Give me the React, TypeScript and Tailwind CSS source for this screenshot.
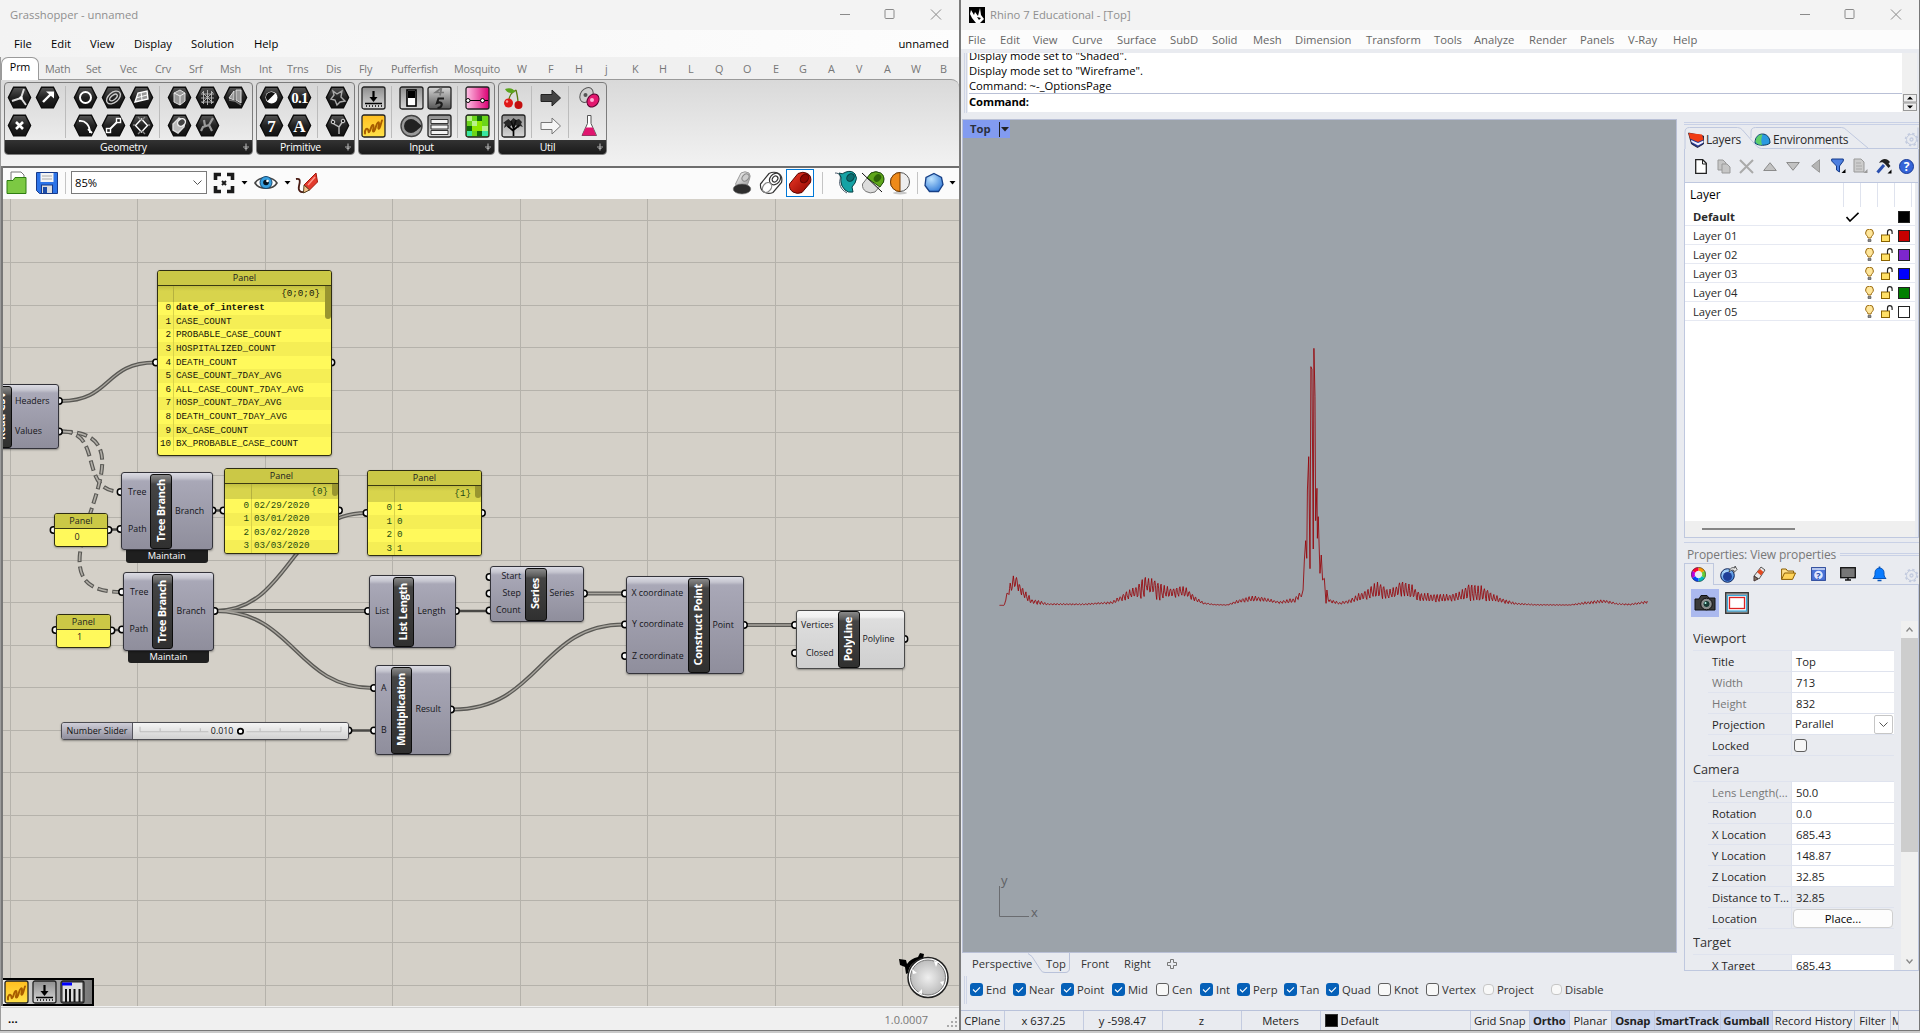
import React from "react";

/* ------------------------------------------------------------------ */
/* Shared pieces                                                       */
/* ------------------------------------------------------------------ */

type Item = [string, number];

function Strip({ items, className = "" }: { items: Item[]; className?: string }) {
  return (
    <div className={`flex items-center whitespace-nowrap ${className}`}>
      {items.map(([label, w], i) => (
        <div key={i} className="shrink-0" style={{ width: w }}>
          {label}
        </div>
      ))}
    </div>
  );
}

function WindowButtons() {
  return (
    <svg className="h-[30px] w-[136px] shrink-0" viewBox="0 0 136 30" fill="none" stroke="#8a8a8a" strokeWidth="1">
      <path d="M17 14.5h10" />
      <rect x="62" y="9.5" width="9" height="9" rx="1" />
      <path d="M108 9.5l10 10M118 9.5l-10 10" />
    </svg>
  );
}

function Caret({ className = "" }: { className?: string }) {
  return (
    <svg className={`h-[4px] w-[7px] shrink-0 ${className}`} viewBox="0 0 7 4">
      <path d="M0.5 0h6L3.5 3.5z" fill="#000" />
    </svg>
  );
}

/* ------------------------------------------------------------------ */
/* Grasshopper ribbon                                                  */
/* ------------------------------------------------------------------ */

function Hex({ children }: { children: React.ReactNode }) {
  return (
    <svg className="h-[23px] w-[25px]" viewBox="0 0 25 23" fill="none" stroke="#fff" strokeWidth="1.4">
      <path d="M6.6 1.2h11.8l5.2 10.3-5.2 10.3H6.6L1.4 11.5z" fill="url(#hexFill)" stroke="#0c0c0c" strokeWidth="1.4" />
      {children}
    </svg>
  );
}

function Square({ children, fill = "url(#greyFill)" }: { children: React.ReactNode; fill?: string }) {
  return (
    <svg className="h-[24px] w-[25px]" viewBox="0 0 25 24" fill="none">
      <rect x="1" y="1" width="23" height="22" rx="2" fill={fill} stroke="#222" strokeWidth="1.3" />
      {children}
    </svg>
  );
}

function Plain({ children }: { children: React.ReactNode }) {
  return (
    <svg className="h-[24px] w-[25px]" viewBox="0 0 25 24" fill="none">
      {children}
    </svg>
  );
}

function Defs() {
  return (
    <svg className="absolute h-0 w-0" aria-hidden="true">
      <defs>
        <linearGradient id="hexFill" x1="0" y1="0" x2="0" y2="1">
          <stop offset="0" stopColor="#555" />
          <stop offset="0.5" stopColor="#222" />
          <stop offset="1" stopColor="#111" />
        </linearGradient>
        <linearGradient id="greyFill" x1="0" y1="0" x2="0" y2="1">
          <stop offset="0" stopColor="#8e8e8e" />
          <stop offset="1" stopColor="#d8d8d8" />
        </linearGradient>
        <linearGradient id="greyDark" x1="0" y1="0" x2="0" y2="1">
          <stop offset="0" stopColor="#d6d6d6" />
          <stop offset="1" stopColor="#555" />
        </linearGradient>
        <linearGradient id="pinkFill" x1="0" y1="0" x2="1" y2="0">
          <stop offset="0" stopColor="#ffc2e6" />
          <stop offset="1" stopColor="#dc0074" />
        </linearGradient>
        <linearGradient id="yellowFill" x1="0" y1="0" x2="0" y2="1">
          <stop offset="0" stopColor="#ffbe20" />
          <stop offset="1" stopColor="#ffe24a" />
        </linearGradient>
        <linearGradient id="cyl" x1="0" y1="0" x2="1" y2="1">
          <stop offset="0" stopColor="#fff" />
          <stop offset="1" stopColor="#999" />
        </linearGradient>
        <linearGradient id="redTube" x1="0" y1="0" x2="1" y2="1">
          <stop offset="0" stopColor="#f23a28" />
          <stop offset="1" stopColor="#8c0500" />
        </linearGradient>
        <radialGradient id="ballBlue" cx="0.35" cy="0.3" r="0.8">
          <stop offset="0" stopColor="#bfe4ff" />
          <stop offset="1" stopColor="#2f78d6" />
        </radialGradient>
        <radialGradient id="knob" cx="0.5" cy="0.5" r="0.5">
          <stop offset="0" stopColor="#efefef" />
          <stop offset="1" stopColor="#bdbdbd" />
        </radialGradient>
      </defs>
    </svg>
  );
}

function Group({ title, className, children }: { title: string; className: string; children: React.ReactNode }) {
  return (
    <div className={`flex h-[73px] flex-col overflow-hidden rounded-[4px] border border-[#7c7c7c] bg-gradient-to-b from-[#d6d6d6] to-[#f1f1f1] ${className}`}>
      <div className="flex h-[57px] items-center">{children}</div>
      <div className="flex flex-1 items-center bg-gradient-to-b from-[#333] to-[#1a1a1a] text-[10.500px] leading-none tracking-[-0.25px] text-white">
        <span className="flex-1 text-center">{title}</span>
        <svg className="mr-[2px] h-[8px] w-[8px]" viewBox="0 0 8 8" stroke="#aaa" strokeWidth="1.2">
          <path d="M4 0.500v7M1 4h6M2.500 5.500h3" />
        </svg>
      </div>
    </div>
  );
}

function Cells({ className = "", children }: { className?: string; children: React.ReactNode }) {
  return <div className={`grid auto-cols-[28px] grid-flow-col grid-rows-[28px_28px] place-items-center ${className}`}>{children}</div>;
}

function Sep({ className = "" }: { className?: string }) {
  return <div className={`h-[52px] w-px shrink-0 bg-[#bcbcbc] ${className}`} />;
}

const Squiggle = () => (
  <path d="M4 19.500c-.5-4 2-6 3-4s0 4 1.500 2S10 12 11.500 11s1 3 .5 5 1 2.500 2-.5 1.500-6 3-7 1 2 .5 4 0 3 1 1.500S20 9 21 6.500" stroke="#a85d00" strokeWidth="1.900" strokeLinejoin="round" strokeLinecap="round" />
);

function Press() {
  return (
    <g>
      <path d="M12.5 5v8" stroke="#000" strokeWidth="2.2" />
      <path d="M8.5 11h8l-4 5z" fill="#000" />
      <path d="M4 17.5h17M5 20h1M8 20h1M11 20h1M14 20h1M17 20h1M20 20h1" stroke="#000" strokeWidth="1.5" />
    </g>
  );
}

function Ribbon() {
  return (
    <div className="flex h-[87px] gap-[3px] rounded-tr-[8px] border-t border-[#9a9a9a] bg-gradient-to-b from-[#d9d9d9] to-[#f2f2f2] pl-[3px] pt-[2px]">
      <Group title="Geometry" className="w-[249px]">
        <Cells>
          <Hex><path d="M14 12L17 3M14 12l-9 3M14 12l5 7" stroke="#ddd" strokeWidth="2" /><circle cx="14" cy="12" r="1.800" fill="#fff" stroke="none" /></Hex>
          <Hex><path d="M9 8l7 7M9 15l7-7" strokeWidth="2.6" /></Hex>
          <Hex><path d="M8 16l8-8" strokeWidth="2.4" /><path d="M11 5.500h8v7z" fill="#fff" stroke="none" /></Hex>
        </Cells>
        <Sep className="ml-[4px]" />
        <Cells className="ml-[5px]">
          <Hex><circle cx="12.500" cy="11.500" r="5.500" strokeWidth="2" /></Hex>
          <Hex><path d="M6 7c6-1 11 4 11 12M15 15l4 4" strokeWidth="1.8" /></Hex>
          <Hex><ellipse cx="12.500" cy="11.500" rx="8" ry="5" transform="rotate(-40 12.500 11.500)" stroke="#ccc" /><ellipse cx="12.500" cy="11.500" rx="4.500" ry="2.200" transform="rotate(-40 12.500 11.500)" stroke="#ccc" /></Hex>
          <Hex><path d="M7 17L18 6" strokeWidth="1.800" /><rect x="5.500" y="14.500" width="4" height="4" fill="#222" /><rect x="15.500" y="4.500" width="4" height="4" fill="#222" /></Hex>
          <Hex><path d="M6 16l3-9 9-2 1 8z" fill="#999" /><path d="M7 12l11-3M12 6l1 8" strokeWidth="1" /></Hex>
          <Hex><path d="M12.500 5l6 6.500-6 6.500-6-6.500z" /><path d="M9 3l3 3M16 3l-3 3M9 20l3-3M16 20l-3-3M4 11h2M19 11h2" stroke="#888" /></Hex>
        </Cells>
        <Sep className="ml-[4px]" />
        <Cells className="ml-[5px]">
          <Hex><path d="M7 7l6-3 5 3v8l-5 4-6-3z" fill="#999" stroke="#ddd" strokeWidth="1" /><path d="M7 7l6 3 5-3M13 10v9" stroke="#eee" strokeWidth="1" /></Hex>
          <Hex><path d="M6 10l6-6 6 3-1 6-6 6-5-3z" fill="#bbb" stroke="#ddd" /><ellipse cx="14.500" cy="8.500" rx="4.200" ry="3.400" transform="rotate(-40 14.500 8.500)" fill="#444" stroke="#eee" /></Hex>
          <Hex><path d="M6 8h13M6 12h13M6 16h13M8.500 5v13M12.500 4v15M16.500 5v13M7 6l11 11M18 6L7 17" stroke="#bbb" strokeWidth="0.900" /></Hex>
          <Hex><path d="M14 11L18 4M14 11l-6 2-2 4M14 11l3 6M9 6l1 6" stroke="#999" strokeWidth="2.200" /></Hex>
          <Hex><path d="M6 12l5-7v9zM13 4h5v13l-5-3z" fill="#999" stroke="#ddd" strokeWidth="1" /><path d="M6 14l6 1 6 4" stroke="#777" /></Hex>
        </Cells>
      </Group>
      <Group title="Primitive" className="w-[99px]">
        <Cells>
          <Hex><circle cx="12.500" cy="11.500" r="6" fill="#fff" stroke="none" /><path d="M8.500 15a5 5 0 0 1 7.500-7.500z" fill="#111" stroke="none" /></Hex>
          <Hex><text x="12.500" y="17.500" textAnchor="middle" fill="#fff" stroke="none" className="font-['Liberation_Serif',serif] text-[17px] font-bold">7</text></Hex>
          <Hex><text x="12.500" y="16.500" textAnchor="middle" fill="#fff" stroke="none" className="font-['Liberation_Serif',serif] text-[15px] font-bold tracking-[-0.8px]">0.1</text></Hex>
          <Hex><text x="12.500" y="17.500" textAnchor="middle" fill="#fff" stroke="none" className="font-['Liberation_Serif',serif] text-[17px] font-bold">A</text></Hex>
        </Cells>
        <Sep className="ml-[4px]" />
        <Cells className="ml-[5px]">
          <Hex><path d="M8 5l4 3 5-3-1 6 4 4-5 1-3 3-2-5-4-1 3-4z" stroke="#aaa" /></Hex>
          <Hex><path d="M7 5l2 5 5 3v7M18 7l-4 6" stroke="#bbb" /><circle cx="18" cy="7" r="1.800" fill="#222" stroke="#ddd" strokeWidth="1" /><circle cx="8" cy="8" r="1.800" fill="#222" stroke="#ddd" strokeWidth="1" /></Hex>
        </Cells>
      </Group>
      <Group title="Input" className="w-[137px]">
        <Cells>
          <Square><Press /></Square>
          <Square fill="url(#yellowFill)"><Squiggle /></Square>
        </Cells>
        <Sep className="ml-[4px]" />
        <Cells className="ml-[5px]">
          <Square><rect x="8" y="4" width="9" height="16" fill="#fff" stroke="#000" strokeWidth="1.600" /><rect x="9" y="5" width="7" height="7" fill="#000" /></Square>
          <Plain><circle cx="12.500" cy="12" r="10.500" fill="#999" stroke="#444" strokeWidth="1.400" /><circle cx="12" cy="12" r="7" fill="#222" /><path d="M17 7l6 5-6 5z" fill="#222" /></Plain>
          <Square fill="url(#greyDark)">
            <path d="M14.500 2L8.500 6.500H17M14.500 2l-1.500 7.500" stroke="#777" strokeWidth="1.700" />
            <path d="M17 12.500h-5.500L10 17c3-1.500 5.500 0 4.500 2.500-.5 1.500-2 2.500-4 2.500" stroke="#1c1c1c" strokeWidth="2.100" />
          </Square>
          <Square><path d="M4 5.500h17v4H4zM4 11h17v4H4zM4 16.500h17v4H4z" fill="#f2f2f2" stroke="#333" strokeWidth="1" /></Square>
        </Cells>
        <Sep className="ml-[4px]" />
        <Cells className="ml-[5px]">
          <Square fill="url(#pinkFill)"><path d="M2 14.500h21" stroke="#000" /><circle cx="3" cy="14.500" r="2" fill="#fff" stroke="#000" /><circle cx="17.500" cy="14.500" r="2" fill="#fff" stroke="#000" /></Square>
          <Square fill="#6bd51a">
            <path d="M2 2h5v5H2zM7 7h5v5H7zM17 12h6v5h-6z" fill="#b9f28a" />
            <path d="M12 2h5v5h-5zM2 12h5v5H2zM12 17h5v5h-5z" fill="#0f6a0c" />
            <path d="M12 7h5v10h-5zM7 12h5v5H7z" fill="#8de700" />
            <path d="M17 17h6v5h-6zM2 17h5v5H2z" fill="#38e6a0" />
          </Square>
        </Cells>
      </Group>
      <Group title="Util" className="w-[109px]">
        <Cells>
          <Plain><path d="M8 15c0-5 3-9 7-11M17 17c0-5-1-9-2-13" stroke="#5a7a10" strokeWidth="1.300" /><path d="M4 3c5-2 9 0 10 3-4 2-8 1-10-3z" fill="#5aa51b" /><circle cx="7.500" cy="17" r="4.500" fill="#e01818" /><circle cx="17.500" cy="19" r="4" fill="#c30f0f" /><circle cx="6" cy="15.500" r="1.200" fill="#ff9c9c" /></Plain>
          <Square><path d="M12.500 22v-8M12.500 17l-6-5M12.500 16l6-5M12.500 14l-2.500-7M12.500 14l2.500-8" stroke="#000" strokeWidth="1.700" /><path d="M4.500 7l3-2 2 2 3-3 2.500 2 3-1 3 3-1 2 2 3-3-1-2 2-2-3-2 2-2-2-3 3-2-2-3 2 1-4-2-1z" fill="#111" fillOpacity="0.850" /></Square>
        </Cells>
        <Sep className="ml-[4px]" />
        <Cells className="ml-[5px]">
          <Plain><path d="M2 8.500h11V4l8.500 8L13 20v-4.500H2z" fill="#444" stroke="#222" /></Plain>
          <Plain><path d="M2 8.500h11V4l8.500 8L13 20v-4.500H2z" fill="#f6f6f6" stroke="#777" /></Plain>
        </Cells>
        <Sep className="ml-[3px]" />
        <Cells className="ml-[6px]">
          <Plain><ellipse cx="9.500" cy="9" rx="6" ry="8" transform="rotate(35 9.500 9)" fill="#cfcfcf" stroke="#555" /><circle cx="8.500" cy="9" r="2" fill="#555" /><ellipse cx="16" cy="14.500" rx="5.500" ry="7" transform="rotate(35 16 14.500)" fill="#e3186f" stroke="#5c0030" /><circle cx="15" cy="14" r="2" fill="#ffb0d6" /></Plain>
          <Plain><path d="M10.500 1.500h3.500v8l5.500 12H5l5.500-12z" fill="#fff" stroke="#555" /><path d="M8.800 13.500h7l3.500 8H5z" fill="#e0156e" /></Plain>
        </Cells>
      </Group>
    </div>
  );
}

/* ------------------------------------------------------------------ */
/* Grasshopper canvas toolbar                                          */
/* ------------------------------------------------------------------ */

function CanvasToolbar() {
  return (
    <div className="flex h-[33px] items-center border-t-2 border-[#6e6e6e] bg-[#fbfbfb] pb-[2px] pl-[3px]">
      <svg className="h-[24px] w-[21px]" viewBox="0 0 21 24"><path d="M5 1h10l3 3v13H5z" fill="#fff" stroke="#777" /><path d="M1 9.500h6l2-3h11v16H1z" fill="#7cc943" stroke="#2e7d12" /></svg>
      <svg className="ml-[8px] h-[24px] w-[24px]" viewBox="0 0 24 24"><path d="M1.500 1.500h21v21h-18l-3-3z" fill="#2d74e8" stroke="#173a8a" /><rect x="5.500" y="2" width="13" height="9" fill="#f4f4f4" /><path d="M7 5h10M7 8h10" stroke="#aaa" /><rect x="6.500" y="14" width="11" height="8.500" fill="#ddd" stroke="#173a8a" /><rect x="8" y="16" width="4" height="6" fill="#1d4ca8" /></svg>
      <div className="ml-[6px] h-[22px] w-px bg-[#c4c4c4]" />
      <div className="ml-[5px] flex h-[23px] w-[136px] items-center border border-[#7a7a7a] bg-white pl-[3px] pr-[4px] text-[11.250px] text-black">
        <span className="flex-1">85%</span>
        <svg className="h-[6px] w-[9px]" viewBox="0 0 9 6" fill="none" stroke="#555"><path d="M0.500 0.500l4 4 4-4" /></svg>
      </div>
      <svg className="ml-[5px] h-[24px] w-[24px]" viewBox="0 0 24 24" fill="none" stroke="#1b1b1b"><path d="M9 3.500H3.500V9M15 3.500h5.500V9M9 20.500H3.500V15M15 20.500h5.500V15" strokeWidth="3.600" /><path d="M10 10l4 4M14 10l-4 4" strokeWidth="2" /></svg>
      <Caret className="ml-[5px]" />
      <svg className="ml-[6px] h-[20px] w-[24px]" viewBox="0 0 24 20"><path d="M1 10C5 3 19 3 23 10 19 17 5 17 1 10z" fill="#fff" stroke="#444" strokeWidth="1.600" /><circle cx="12" cy="9.500" r="6" fill="#37a0e0" stroke="#15466e" /><circle cx="12" cy="9.500" r="2.800" fill="#04121e" /><circle cx="13.500" cy="8" r="1.300" fill="#fff" /></svg>
      <Caret className="ml-[6px]" />
      <svg className="ml-[4px] h-[24px] w-[24px]" viewBox="0 0 24 24" fill="none"><path d="M1 8c5-1 4 3 3 7s1 8 7 5" stroke="#4a1c14" strokeWidth="1.800" /><path d="M9 14L21 2l1.500 9-8 8z" fill="#e33a2c" stroke="#a21508" /><path d="M9 14l5.500 5-6 3z" fill="#f5c18a" stroke="#542" /><path d="M13 14l7-8" stroke="#ff9a8c" strokeWidth="1.500" /></svg>
      <div className="flex-1" />
      <div className="flex items-center">
        <svg className="h-[26px] w-[20px]" viewBox="0 0 20 26"><path d="M3.500 14L9 3q4-2.500 8 0 2 3 .5 6L15 16H5z" fill="url(#cyl)" stroke="#999" /><ellipse cx="13.500" cy="7.500" rx="4" ry="3" transform="rotate(-50 13.500 7.500)" fill="#ccc" stroke="#888" /><ellipse cx="10" cy="19" rx="8.800" ry="5" fill="#2e2e2e" stroke="#777" strokeWidth="0.600" /></svg>
        <svg className="ml-[7px] h-[24px] w-[24px]" viewBox="0 0 24 24" fill="#fff" stroke="#333" strokeWidth="1.200"><path d="M1.500 13L10 2.500q5-2.500 9.500 0t3 9L14 21.500q-5 2-9-.5T1.500 13z" /><ellipse cx="16" cy="8" rx="6.300" ry="5" transform="rotate(-50 16 8)" /><ellipse cx="16" cy="8" rx="3.300" ry="2.500" transform="rotate(-50 16 8)" /><ellipse cx="8" cy="16.500" rx="4" ry="5.500" transform="rotate(40 8 16.500)" fill="none" stroke="#888" /></svg>
        <div className="ml-[3px] flex h-[28px] w-[28px] items-center justify-center border border-[#0078d7] bg-[#fff]">
          <svg className="h-[24px] w-[24px]" viewBox="0 0 24 24" stroke="#5a0400"><path d="M1.500 13L10 2.500q5-2.500 9.500 0t3 9L14 21.500q-5 2-9-.5T1.500 13z" fill="url(#redTube)" /><ellipse cx="16.500" cy="7.500" rx="4.800" ry="3.600" transform="rotate(-50 16.500 7.500)" fill="#8f0802" /></svg>
        </div>
        <div className="ml-[8px] h-[22px] w-px bg-[#c4c4c4]" />
        <svg className="ml-[11px] h-[25px] w-[24px]" viewBox="0 0 24 25"><path d="M1 3c5 0 6 3 5 7s0 9 7 13" fill="none" stroke="#456" /><path d="M5 3q3 2 7-1 6-2 9 2t0 9l-3 4 1 5q-5 1-8-2-4-4-4-8 1-5-2-9z" fill="#16a3a5" stroke="#063f42" /><ellipse cx="16.500" cy="7.500" rx="4.200" ry="3.300" transform="rotate(-50 16.500 7.500)" fill="#0b6e70" stroke="#063f42" /></svg>
        <svg className="ml-[3px] h-[25px] w-[24px]" viewBox="0 0 24 25"><path d="M1.500 14L10 3q5-2.500 9.500 0t3 9L14 22q-5 2-9-.5T1.500 14z" fill="#dcdcdc" stroke="#777" /><path d="M6 8l4-5q5-2.500 9.500 0t3 9L19 17z" fill="#5ea61a" stroke="#23520a" /><ellipse cx="16.500" cy="8" rx="4.200" ry="3.300" transform="rotate(-50 16.500 8)" fill="#2e6408" /><path d="M1 3l20 19" stroke="#111" /></svg>
        <svg className="ml-[4px] h-[25px] w-[22px]" viewBox="0 0 22 25"><circle cx="11" cy="12" r="9.500" fill="#eee" stroke="#555" /><path d="M11 2.500a9.500 9.500 0 0 0 0 19z" fill="#ee8a19" stroke="#7a3d00" /><ellipse cx="11" cy="23" rx="7" ry="1.500" fill="#0003" /></svg>
        <div className="ml-[6px] h-[22px] w-px bg-[#c4c4c4]" />
        <svg className="ml-[6px] h-[22px] w-[20px]" viewBox="0 0 20 22"><path d="M10 1.500l7.500 4 1.500 7-4.500 7h-9l-4.500-6 1-8z" fill="url(#ballBlue)" stroke="#163f86" strokeWidth="1.300" /></svg>
        <Caret className="ml-[5px] mr-[3px]" />
      </div>
    </div>
  );
}

/* ------------------------------------------------------------------ */
/* Node graph                                                          */
/* ------------------------------------------------------------------ */

const OX = 3;
const OY = 199;

function at(x: number, y: number, w?: number, h?: number): React.CSSProperties {
  return { left: x - OX, top: y - OY, width: w, height: h };
}

function Label({ x, y, children }: { x: number; y: number; children: React.ReactNode }) {
  return (
    <div className="absolute flex h-[12px] items-center whitespace-nowrap text-[8.800px] leading-none text-[#15151a]" style={at(x, y - 6)}>
      {children}
    </div>
  );
}

type NodeSpec = {
  title: string;
  x: number; y: number; w: number; h: number;
  sx: number; sw: number;
  light?: boolean;
  labels: [string, number, number][];
  tag?: boolean;
};

const nodes: NodeSpec[] = [
  { title: "Read CSV", x: -40, y: 384, w: 99, h: 65, sx: -9, sw: 21, labels: [["Headers", 15, 401], ["Values", 15, 431]] },
  { title: "Tree Branch", x: 121, y: 472, w: 91.500, h: 78, sx: 150, sw: 22, tag: true, labels: [["Tree", 128, 492], ["Path", 128, 529], ["Branch", 175, 511]] },
  { title: "Tree Branch", x: 123, y: 572, w: 91, h: 78.500, sx: 152, sw: 21, tag: true, labels: [["Tree", 130, 592], ["Path", 129.500, 629], ["Branch", 176.500, 611]] },
  { title: "List Length", x: 369, y: 575, w: 87, h: 73, sx: 393, sw: 21, labels: [["List", 375, 611], ["Length", 417.500, 611]] },
  { title: "Multiplication", x: 375, y: 665, w: 76, h: 90, sx: 391, sw: 21, labels: [["A", 381, 688], ["B", 381, 730.500], ["Result", 415.500, 709.500]] },
  { title: "Series", x: 490, y: 566, w: 94, h: 56, sx: 525, sw: 21.500, labels: [["Start", 501.500, 576.500], ["Step", 502.500, 593.500], ["Count", 496, 610.500], ["Series", 549.500, 593.500]] },
  { title: "Construct Point", x: 626, y: 576, w: 118, h: 98, sx: 688, sw: 21.500, labels: [["X coordinate", 631.500, 593.500], ["Y coordinate", 632, 624.500], ["Z coordinate", 632, 656], ["Point", 712.500, 625]] },
  { title: "PolyLine", x: 795.500, y: 609.500, w: 109, h: 59.500, sx: 838, sw: 21.500, light: true, labels: [["Vertices", 801, 625], ["Closed", 806, 653], ["Polyline", 862.500, 639]] },
];

function GraphNode({ n }: { n: NodeSpec }) {
  return (
    <>
      {n.tag && (
        <div className="absolute flex items-end justify-center rounded-[3px] bg-[#1f1f1f] pb-[2px] text-[9.250px] leading-none text-white" style={at(n.x + 5, n.y + n.h - 8, n.w - 10, 20.500)}>
          Maintain
        </div>
      )}
      <div
        className={`absolute rounded-[3px] border-[1.5px] shadow-[0_1px_2px_rgba(0,0,0,0.35)] ${
          n.light
            ? "border-[#4a4a4a] bg-[linear-gradient(#f6f6f6_0px,#f0f0f0_6px,#dedede_8px,#cfcfcf_100%)]"
            : "border-[#33333a] bg-[linear-gradient(#dcdce4_0px,#c6c6d0_5px,#a9a8b7_8px,#8f8e9c_100%)]"
        }`}
        style={at(n.x, n.y, n.w, n.h)}
      />
      <div className="absolute flex items-center justify-center rounded-[3px] border-[1.5px] border-[#0c0c0c] bg-[linear-gradient(#8a8a8a_0px,#5c5c5c_7px,#444_9px,#303030_100%)] pr-[2px]" style={at(n.sx, n.y + 1.500, n.sw, n.h - 3)}>
        <span className="rotate-180 whitespace-nowrap text-[11px] font-bold leading-none tracking-[-0.3px] text-white [writing-mode:vertical-rl]">{n.title}</span>
      </div>
      {n.labels.map(([t, x, y]) => (
        <Label key={t} x={x} y={y}>{t}</Label>
      ))}
    </>
  );
}

type PanelSpec = {
  x: number; y: number; w: number; h: number;
  path: string; index: number; rows: string[]; thumb: number; green?: boolean; pad: number;
};

const panels: PanelSpec[] = [
  {
    x: 157, y: 270, w: 175, h: 186, path: "{0;0;0}", index: 17, thumb: 33, pad: 11,
    rows: ["date_of_interest", "CASE_COUNT", "PROBABLE_CASE_COUNT", "HOSPITALIZED_COUNT", "DEATH_COUNT", "CASE_COUNT_7DAY_AVG", "ALL_CASE_COUNT_7DAY_AVG", "HOSP_COUNT_7DAY_AVG", "DEATH_COUNT_7DAY_AVG", "BX_CASE_COUNT", "BX_PROBABLE_CASE_COUNT"],
  },
  { x: 224, y: 467.500, w: 115, h: 86, path: "{0}", index: 28, thumb: 12, pad: 10, green: true, rows: ["02/29/2020", "03/01/2020", "03/02/2020", "03/03/2020"] },
  { x: 367, y: 470, w: 115, h: 86, path: "{1}", index: 28, thumb: 12, pad: 10, green: true, rows: ["1", "0", "0", "1"] },
];

function DataPanel({ p }: { p: PanelSpec }) {
  const cols = { gridTemplateColumns: `${p.index - 1}px 1fr` };
  return (
    <div className="absolute flex flex-col overflow-hidden rounded-[3px] border-[1.5px] border-[#2e2d12] bg-[#fff95b] shadow-[0_1px_2px_rgba(0,0,0,0.3)]" style={at(p.x, p.y, p.w, p.h)}>
      <div className="flex h-[15px] shrink-0 items-center justify-center border-b border-[#3b3a12] bg-[#cbc846] pb-px text-[9px] leading-none text-[#222]">Panel</div>
      <div className={`relative flex flex-1 flex-col font-['Liberation_Mono',monospace] text-[9.250px] leading-none ${p.green ? "text-[#1d4a12]" : "text-[#14140a]"}`}>
        <div className="grid h-[15.500px] shrink-0 bg-[linear-gradient(#c2bf40_0px,#d8d44c_5px)]" style={cols}>
          <div className="border-r border-[#b5b13f]" />
          <div className="flex items-center justify-end" style={{ paddingRight: p.pad }}>{p.path}</div>
        </div>
        {p.rows.map((r, i) => (
          <div key={i} className={`grid h-[13.600px] shrink-0 items-stretch ${i % 2 ? "bg-[#f5ee55]" : "bg-[#fff95b]"}`} style={cols}>
            <div className="flex items-center justify-end border-r border-[#d8d24a] pb-px pr-[2px]">{i}</div>
            <div className={`flex items-center whitespace-nowrap pb-px pl-[2px] ${!p.green && i === 0 ? "font-bold" : ""}`}>{r}</div>
          </div>
        ))}
        <div className="absolute right-0 top-0 w-[6px] rounded-b-[3px] bg-[#99952f]" style={{ height: p.thumb }} />
      </div>
    </div>
  );
}

function ValuePanel({ x, y, w, value }: { x: number; y: number; w: number; value: string }) {
  return (
    <div className="absolute flex flex-col overflow-hidden rounded-[3px] border-[1.5px] border-[#2e2d12] bg-[#fff95b] text-[9px] leading-none text-[#222] shadow-[0_1px_2px_rgba(0,0,0,0.3)]" style={at(x, y, w, 34)}>
      <div className="flex h-[15px] items-center justify-center border-b border-[#3b3a12] bg-[#cbc846] pb-px">Panel</div>
      <div className="flex flex-1 items-center justify-center pb-[3px] pr-[8px]">{value}</div>
    </div>
  );
}

const doubleWires = [
  "M61 401C112 401 104 362.500 155 362.500",
  "M215 611C290 611 290 513 366 513",
  "M215 611H368",
  "M215 611C295 611 295 688 373 688",
  "M453 709.500C540 709.500 540 624.500 624 624.500",
  "M586 593.500H624",
  "M746 625H795",
];
const dashedWires = ["M62 431.500C104 431.500 78 491.500 120 491.500", "M62 431.500C172 431.500 9 592 121 592"];
const singleWires = ["M214 510.500H223", "M458 611H488", "M351 730.500H373", "M110 529.500H120", "M113 630H121"];
const inPorts = [[156, 362.500], [120.500, 492], [120.500, 529], [53.500, 530], [122, 592], [122, 629.500], [55.500, 630], [223.500, 510.500], [366.500, 513], [368, 611], [374, 688], [374, 730.500], [489.500, 577], [489.500, 593.500], [489.500, 610.500], [625, 593.500], [625, 624.500], [625, 656], [795, 625], [795, 653]];
const outPorts = [[59, 401], [59, 431.500], [331.500, 362.500], [108.500, 530], [111.500, 630.500], [212.500, 510.500], [214.500, 611], [339, 510.500], [482, 513], [456, 611], [451, 709.500], [348.500, 730.500], [584, 593.500], [744, 625], [904.500, 639]];

const vLines = [10.500, 137.500, 265.500, 392.500, 520.500, 647.500, 775.500, 902.500];
const hLines = Array.from({ length: 19 }, (_, i) => Math.floor(220 + i * 42.500) + 0.500);

function Graph() {
  return (
    <div className="relative h-[807px] w-[956px] shrink-0 overflow-hidden bg-[#d4d0c8]">
      <svg className="absolute inset-0 h-full w-full" viewBox="3 199 956 807" fill="none">
        <g stroke="#b5b2ab">
          {vLines.map((x) => <path key={x} d={`M${x} 199V1006`} />)}
          {hLines.map((y) => <path key={y} d={`M3 ${y}H959`} />)}
        </g>
        {doubleWires.map((d) => <path key={d} d={d} stroke="#5a5955" strokeWidth="4" />)}
        {doubleWires.map((d) => <path key={d} d={d} stroke="#a8a59e" strokeWidth="1.300" />)}
        {dashedWires.map((d) => <path key={d} d={d} stroke="#5a5955" strokeWidth="4" strokeDasharray="10.500 4.500" />)}
        {dashedWires.map((d) => <path key={d} d={d} stroke="#b2afa8" strokeWidth="1.600" strokeDasharray="8.500 6.500" strokeDashoffset="-1" />)}
        {singleWires.map((d) => <path key={d} d={d} stroke="#4a4946" strokeWidth="2.500" />)}
        <g fill="#fff" stroke="#000" strokeWidth="1.500">
          {inPorts.map(([x, y]) => <circle key={`${x},${y}`} cx={x} cy={y} r="3.200" />)}
          {outPorts.map(([x, y]) => <circle key={`${x},${y}`} cx={x} cy={y} r="3.200" />)}
        </g>
      </svg>

      {nodes.map((n) => <GraphNode key={n.title + n.y} n={n} />)}
      {panels.map((p) => <DataPanel key={p.y} p={p} />)}
      <ValuePanel x={54} y={513} w={54} value="0" />
      <ValuePanel x={56} y={613.500} w={55} value="1" />

      {/* Number slider */}
      <div className="absolute flex overflow-hidden rounded-[3px] border-[1.5px] border-[#4c4c52] text-[9px] leading-none text-[#111] shadow-[0_1px_2px_rgba(0,0,0,0.35)]" style={at(61, 721.500, 288, 18.500)}>
        <div className="flex w-[71px] items-center justify-center border-r border-[#55555e] bg-gradient-to-b from-[#cfced8] to-[#8f8e9c] pb-px">Number Slider</div>
        <div className="flex flex-1 items-center bg-gradient-to-b from-[#f4f4f4] to-[#d2d2d2]">
          <svg className="h-full w-full" viewBox="133 722 214 16" fill="none">
            <path d="M140 725.500V730.500M340 725.500V730.500M160 727v3M180 727v3M200 727v3M259.500 727v3M279.500 727v3M299.500 727v3M319.500 727v3" stroke="#aaa" strokeWidth="0.700" />
            <path d="M140 730.500H208M246 730.500H340" stroke="#b4b4b4" strokeWidth="0.800" />
            <text x="210.500" y="733" fill="#111" className="text-[8.800px]">0.010</text>
            <circle cx="240" cy="730" r="2.700" fill="#fff" stroke="#000" strokeWidth="1.700" />
          </svg>
        </div>
      </div>

      {/* Widget tray */}
      <div className="absolute bottom-0 left-0 flex h-[28px] w-[91px] items-center gap-[3px] border-2 border-l-0 border-black bg-gradient-to-r from-[#eee] to-[#777] pl-px">
        <Square fill="url(#yellowFill)"><Squiggle /></Square>
        <Square><Press /></Square>
        <Square><path d="M2 2h21v20H2z" fill="#ddd" stroke="#222" /><path d="M2 4h10" stroke="#00f" strokeWidth="3" /><path d="M6 22V9M10 22V9M14.500 22V9M19.500 22V9" stroke="#111" strokeWidth="2" /></Square>
      </div>

      {/* Navigation compass */}
      <svg className="absolute bottom-[4px] right-[7px] h-[54px] w-[56px]" viewBox="0 0 56 54">
        <path d="M3 11l7 1 1 4c3-4 6-6 11-7l2-4 4 1-1 5c-8 1-14 6-15 14l-2 1-1-7-5-2z" fill="#000" />
        <circle cx="32" cy="29.500" r="20" fill="#fff" stroke="#222" strokeWidth="1.500" />
        <circle cx="32" cy="29.500" r="17.500" fill="url(#knob)" stroke="#777" />
        <path d="M38 13l4 1-2 5zM16 21l1 5 4-1zM22 45l4 1 0-5zM47 38l1-5-4 1z" fill="#fff" />
      </svg>
    </div>
  );
}

/* ------------------------------------------------------------------ */
/* Grasshopper window                                                  */
/* ------------------------------------------------------------------ */

const ghMenu: Item[] = [["File", 37], ["Edit", 39], ["View", 44], ["Display", 57], ["Solution", 63], ["Help", 60]];
const ghTabs: Item[] = [["Math", 41], ["Set", 34], ["Vec", 35], ["Crv", 34], ["Srf", 31], ["Msh", 39], ["Int", 28], ["Trns", 39], ["Dis", 33], ["Fly", 32], ["Pufferfish", 63], ["Mosquito", 63], ["W", 31], ["F", 27], ["H", 30], ["j", 27], ["K", 27], ["H", 29], ["L", 27], ["Q", 28], ["O", 30], ["E", 26], ["G", 29], ["A", 28], ["V", 28], ["A", 27], ["W", 29], ["B", 12]];

function Grasshopper() {
  return (
    <div className="flex w-[961px] shrink-0 flex-col border-r-2 border-[#7b7b7b] bg-[#f0f0f0]">
      <div className="flex h-[30px] shrink-0 items-center justify-between bg-[#f3f3f3] pl-[10px] text-[#8f8f8f]">
        <span>Grasshopper - unnamed</span>
        <WindowButtons />
      </div>
      <div className="flex h-[27px] shrink-0 items-center bg-gradient-to-r from-[#f3f3f3] via-[#f8f8f8] to-[#fdfdfd] pl-[14px] pr-[10px] text-black">
        <Strip items={ghMenu} />
        <span className="ml-auto">unnamed</span>
      </div>
      <div className="flex flex-1 flex-col border-l border-[#9c9c9c]">
        <div className="flex h-[22px] text-[10.800px] tracking-[-0.2px] text-[#777]">
          <div className="z-10 -mb-px flex h-[23px] w-[38px] items-center justify-center rounded-t-[7px] border border-b-0 border-[#9a9a9a] bg-white pb-[3px] text-black">Prm</div>
          <Strip items={ghTabs} className="pl-[6px] pt-[2px]" />
        </div>
        <Ribbon />
        <div className="flex flex-col border-l-2 border-[#777]">
          <CanvasToolbar />
          <Graph />
        </div>
        <div className="mt-px flex h-[23px] items-center justify-between border-t border-[#d0d0d0] bg-[#f0f0f0] pl-[7px] text-black">
          <span className="font-bold">...</span>
          <div className="flex h-full items-end">
            <span className="mr-[18px] self-center text-[11px] text-[#777]">1.0.0007</span>
            <svg className="mb-[2px] mr-[1px] h-[12px] w-[12px]" viewBox="0 0 12 12" fill="#aaa"><path d="M9 1h2v2H9zM9 5h2v2H9zM9 9h2v2H9zM5 5h2v2H5zM5 9h2v2H5zM1 9h2v2H1z" /></svg>
          </div>
        </div>
      </div>
    </div>
  );
}

/* ------------------------------------------------------------------ */
/* Viewport plot                                                       */
/* ------------------------------------------------------------------ */

/* Envelope of the case curve: x, crest, trough */
const envelope: [number, number, number][] = [
  [45, 826, 826], [56, 826, 826], [62, 790, 800], [68, 763, 797], [76, 738, 777], [85, 735, 775], [92, 763, 792], [100, 774, 802], [110, 791, 816], [120, 806, 823], [135, 810, 824], [155, 820, 825], [240, 821, 825], [275, 817, 823], [305, 814, 822], [325, 796, 813], [340, 780, 812], [355, 772, 802], [365, 755, 812], [371, 748, 808], [378, 732, 808], [384, 742, 785], [395, 746, 795], [402, 742, 792], [410, 750, 818], [430, 768, 804], [450, 772, 804], [465, 766, 800], [480, 776, 804], [495, 798, 814], [515, 816, 823], [540, 823, 825], [570, 824, 826], [600, 806, 819], [625, 797, 815], [650, 800, 814], [690, 814, 821], [725, 803, 819], [742, 780, 802],
];
const spike: [number, number][] = [[745, 780], [748, 690], [751, 632], [753.500, 685], [755, 480], [758, 380], [761, 716], [763, 110], [765.500, 118], [768.500, 657], [770, 55], [772.500, 200], [774, 572], [777, 475], [778, 625], [780, 560], [784, 730], [787, 675], [790, 750], [794, 745], [798, 820], [800, 780], [803, 810]];
const tail: [number, number, number][] = [
  [805, 806, 818], [830, 817, 824], [855, 806, 819], [875, 788, 814], [895, 774, 809], [910, 758, 804], [925, 754, 807], [940, 778, 808], [955, 771, 805], [970, 746, 801], [985, 758, 804], [1000, 766, 807], [1015, 788, 814], [1045, 789, 818], [1080, 793, 815], [1110, 782, 812], [1125, 754, 815], [1150, 766, 817], [1165, 768, 814], [1180, 789, 815], [1210, 807, 821], [1235, 818, 824], [1280, 823, 826], [1360, 824, 826], [1400, 814, 823], [1440, 808, 819], [1470, 820, 824], [1500, 821, 826], [1540, 811, 820],
];

function wave(env: [number, number, number][]): [number, number][] {
  const out: [number, number][] = [];
  const week = [1, 0.200, 0, 0.350, 0.900];
  let k = 0;
  for (let x = env[0][0]; x <= env[env.length - 1][0]; x += 1.450) {
    let i = 0;
    while (i < env.length - 2 && env[i + 1][0] < x) i++;
    const [x0, h0, l0] = env[i];
    const [x1, h1, l1] = env[i + 1];
    const t = (x - x0) / (x1 - x0);
    const hi = h0 + (h1 - h0) * t;
    const lo = l0 + (l1 - l0) * t;
    const jitter = ((k * 37) % 11) / 11;
    const w = week[k % 5];
    const f = w > 0.800 ? w * (0.750 + 0.250 * jitter) : w + jitter * 0.220;
    out.push([x, hi + (lo - hi) * f]);
    k++;
  }
  return out;
}

const plotPoints = [...wave(envelope), ...spike, ...wave(tail)]
  .map(([x, y]) => `${(980 + x / 2.306).toFixed(2)},${(330 + y / 3).toFixed(2)}`)
  .join(" ");

function Viewport() {
  return (
    <div className="relative ml-[1px] h-[834px] w-[715px] border border-[#b9c0d6] bg-[#9ca3aa]">
      <svg className="absolute inset-0 h-full w-full" viewBox="963 120 713 832" fill="none">
        <polyline points={plotPoints} stroke="#960408" strokeWidth="0.850" strokeLinejoin="bevel" />
        <path d="M999.500 886V916.500H1029" stroke="#6a6c70" />
        <g fill="#5f6165" className="text-[13px]">
          <text x="1001" y="885">y</text>
          <text x="1031" y="917">x</text>
        </g>
      </svg>
      <div className="absolute left-0 top-0 flex h-[18px] w-[47px] items-center bg-[#829bf0] pl-[7px] font-bold text-[#2b303c]">
        <span className="w-[29px]">Top</span>
        <span className="mr-px h-[15px] w-px bg-[#222]" />
        <svg className="h-[5px] w-[8px]" viewBox="0 0 8 5"><path d="M0 0h8L4 4.500z" fill="#222" /></svg>
      </div>
    </div>
  );
}

/* ------------------------------------------------------------------ */
/* Rhino panels                                                        */
/* ------------------------------------------------------------------ */

function Gear() {
  return (
    <svg className="h-[15px] w-[15px]" viewBox="0 0 15 15" fill="none" stroke="#c3cbdf"><circle cx="7.500" cy="7.500" r="6" strokeWidth="1.600" strokeDasharray="2.400 2.310" /><circle cx="7.500" cy="7.500" r="5" /><circle cx="7.500" cy="7.500" r="1.500" strokeWidth="1.300" /></svg>
  );
}

const layers: [string, string][] = [["Layer 01", "bg-[#c80000]"], ["Layer 02", "bg-[#7d26cd]"], ["Layer 03", "bg-[#0000ff]"], ["Layer 04", "bg-[#008000]"], ["Layer 05", "bg-white"]];

function LayerRow({ name, color, current }: { name: string; color: string; current?: boolean }) {
  return (
    <div className={`flex h-[19px] items-center border-b border-[#e6e9f2] pl-[8px] pt-px text-[#2a2a2a] ${current ? "font-bold" : ""}`}>
      <span className="w-[153px]">{name}</span>
      {current ? (
        <svg className="mr-[39px] h-[10px] w-[13px]" viewBox="0 0 13 10" fill="none" stroke="#000" strokeWidth="1.600"><path d="M0.500 5l3.500 4L12.500 0.800" /></svg>
      ) : (
        <span className="flex w-[52px] justify-end gap-[7px] pr-[5px]">
          <svg className="h-[13px] w-[9px]" viewBox="0 0 9 13" fill="none"><path d="M3 9c0-2-2.400-2.500-2.400-5a3.900 3.900 0 0 1 7.800 0C8.400 6.500 6 7 6 9z" fill="#ffe69a" stroke="#9a6a10" /><path d="M3 10.500h3v2H3z" fill="#8a8a8a" stroke="#444" strokeWidth="0.600" /></svg>
          <svg className="h-[13px] w-[12px]" viewBox="0 0 12 13" fill="none"><rect x="0.500" y="6" width="8" height="6.500" fill="#ffe066" stroke="#8a6300" /><path d="M6.500 6V3a2.300 2.300 0 0 1 4.600 0v2" stroke="#222" strokeWidth="1.200" /></svg>
        </span>
      )}
      <span className={`h-[12px] w-[12px] border border-[#222] ${color}`} />
    </div>
  );
}

function LayersPanel() {
  return (
    <div className="flex h-[416px] flex-col">
      <div className="h-[3px] border-y border-[#c9d1e6]" />
      <div className="relative mt-[2px] flex h-[22px] items-center pt-[3px] text-[12px] tracking-[-0.2px] text-[#2a2a2a]">
        <svg className="absolute inset-0 h-full w-full" viewBox="0 0 234 22" fill="none" stroke="#bfc8df"><path d="M0.500 22V5q0-4.500 4.500-4.500h48q3 0 5 2.500l14 16q2.500 2.500 5 2.500h156.500M66.500 11V5q0-4.500 4.500-4.500h86q3 0 5 2.500l22 18.500M233.500 21V0.500" /></svg>
        <svg className="relative ml-[4px] h-[16px] w-[16px]" viewBox="0 0 16 16"><path d="M0.500 1l3 11 6 3.500 6-3.500V4z" fill="#27398f" stroke="#112" strokeWidth="0.800" /><path d="M3 8l7 3 5.500-2.500v2L10 13.500 3.500 10z" fill="#eef" /><path d="M0.500 1L14 2.500l1.500 5L10 10 2 6.500z" fill="#f03c14" /></svg>
        <span className="relative ml-[2px] w-[47px]">Layers</span>
        <svg className="relative ml-[1px] h-[14px] w-[17px]" viewBox="0 0 17 14"><path d="M1 10C1 4 4.500 1 8.500 1S16 4 16 10c-3 3-12 3-15 0z" fill="#2a9ae0" stroke="#0a3c60" /><path d="M1.500 9C2 4 4.500 1.500 8.500 1.500 7 5 7 9 8 12 5 12 3 11 1.500 9z" fill="#5fcf6a" /></svg>
        <span className="relative ml-[2px]">Environments</span>
        <div className="ml-auto"><Gear /></div>
      </div>
      <div className="flex flex-1 flex-col border-x border-b border-[#bfc8df]">
        <div className="grid h-[34px] grid-cols-[repeat(10,22.800px)] place-items-center border-b border-[#bfc8df] pl-[5px] pt-px">
          <svg className="h-[15px] w-[12px]" viewBox="0 0 12 15"><path d="M0.700 0.700h7l3.600 3.600v10H0.700z" fill="#fff" stroke="#222" strokeWidth="1.300" /><path d="M7.500 1v4h4" fill="none" stroke="#222" /></svg>
          <svg className="h-[15px] w-[15px]" viewBox="0 0 15 15" fill="#c6c6c6" stroke="#999"><path d="M1 1h5l3 3v7H1z" /><path d="M5 5h5l3 3v6H5z" /></svg>
          <svg className="h-[15px] w-[15px]" viewBox="0 0 15 15" stroke="#aaa" strokeWidth="2"><path d="M1 1l13 13M14 1L1 14" /></svg>
          <svg className="h-[9px] w-[14px]" viewBox="0 0 14 9"><path d="M7 0.700L13.300 8.500H0.700z" fill="#c2c2c2" stroke="#8b8b8b" /></svg>
          <svg className="h-[9px] w-[14px]" viewBox="0 0 14 9"><path d="M7 8.300L13.300 0.500H0.700z" fill="#c2c2c2" stroke="#8b8b8b" /></svg>
          <svg className="h-[14px] w-[9px]" viewBox="0 0 9 14"><path d="M0.700 7L8.500 0.700v12.600z" fill="#b4b4b4" stroke="#999" /></svg>
          <svg className="h-[16px] w-[15px]" viewBox="0 0 15 16"><path d="M0.700 1h11.600v2L8.500 8v6l-3-2V8L0.700 3z" fill="#4d7fe0" stroke="#143a8a" /><path d="M14.500 11v4h-4z" fill="#000" /></svg>
          <svg className="h-[16px] w-[15px]" viewBox="0 0 15 16"><path d="M1 1h7l3 3v10H1z" fill="#ccc" stroke="#999" /><path d="M3 5h5M3 8h6M3 11h6" stroke="#aaa" /><path d="M14.500 11v4h-4z" fill="#999" /></svg>
          <svg className="h-[16px] w-[16px]" viewBox="0 0 16 16"><path d="M1.500 14.500L8 7" stroke="#2a4fae" strokeWidth="3" /><path d="M3 5c2-4 6-5 9-3l2 2-1.500 1.500L14.500 8l-2 2-3.500-4-2-1.500C5.500 4 4 4.500 3 5z" fill="#222" /><path d="M15.500 11.500v4h-4z" fill="#000" /></svg>
          <svg className="h-[15px] w-[15px]" viewBox="0 0 15 15"><circle cx="7.500" cy="7.500" r="7" fill="#3564d8" stroke="#193a96" /><text x="7.500" y="12" textAnchor="middle" fill="#fff" className="text-[12px] font-bold">?</text></svg>
        </div>
        <div className="mr-[3px] flex flex-1 flex-col bg-white">
          <div className="flex h-[24px] items-center pl-[5px]">
            <span className="w-[153px] text-[12px]">Layer</span>
            {[0, 1, 2, 3].map((i) => <span key={i} className="h-full w-[17px] border-l border-[#dfe3ee]" />)}
            <span className="h-full border-l border-[#dfe3ee]" />
          </div>
          <LayerRow name="Default" color="bg-black" current />
          {layers.map(([n, c]) => <LayerRow key={n} name={n} color={c} />)}
          <div className="mt-auto flex h-[16px] items-center bg-[#efefef] pl-[17px]"><span className="h-[2px] w-[93px] bg-[#858585]" /></div>
        </div>
      </div>
    </div>
  );
}

function PropertyRow({ label, value, dim, kind = "text" }: { label: string; value: string; dim?: boolean; kind?: string }) {
  const white = kind === "text" || kind === "select";
  return (
    <div className="ml-[15px] flex h-[21px] shrink-0 items-stretch border-b border-[#dfe3ee] text-[#1f1f1f]">
      <span className={`flex w-[84px] items-center overflow-hidden whitespace-nowrap border-r border-[#dfe3ee] pl-[4px] pt-px ${dim ? "text-[#777]" : ""}`}>{label}</span>
      <span className={`flex flex-1 items-center ${white ? "bg-white" : ""} ${kind === "button" || kind === "check" ? "pl-[1px]" : kind === "select" ? "pl-[3px]" : "pl-[4px] pt-px"}`}>
        {kind === "check" && <span className="ml-px h-[13px] w-[13px] rounded-[3px] border border-[#5f5f5f] bg-[#f6f6f6]" />}
        {kind === "button" && <span className="mr-px flex h-[19px] flex-1 items-center justify-center rounded-[4px] border border-[#cfcfcf] bg-[#fdfdfd] pt-px text-black">{value}</span>}
        {kind !== "check" && kind !== "button" && value}
        {kind === "select" && (
          <span className="ml-auto mr-px flex h-[19px] w-[19px] items-center justify-center rounded-[2px] border border-[#c6c6c6] bg-white">
            <svg className="h-[5px] w-[9px]" viewBox="0 0 9 5" fill="none" stroke="#555"><path d="M0.500 0.500l4 4 4-4" /></svg>
          </span>
        )}
      </span>
    </div>
  );
}

function Heading({ children, className = "" }: { children: string; className?: string }) {
  return <div className={`flex shrink-0 items-center border-b border-[#dfe3ee] text-[12.750px] text-[#333] ${className}`}>{children}</div>;
}

function PropertiesPanel() {
  return (
    <div className="mt-[4px] flex h-[429px] flex-col border-t border-[#c9d1e6]">
      <div className="flex h-[20px] items-center pl-[3px] pt-[4px] text-[12px] tracking-[-0.1px] text-[#777]">
        <span>Properties: View properties</span>
        <span className="ml-[4px] mt-[-2px] h-[3px] flex-1 border-y border-[#c9d1e6]" />
      </div>
      <div className="flex h-[22px]">
        <div className="flex w-[30px] shrink-0 items-center justify-center border border-b-0 border-[#bfc8df] pr-[2px]">
          <svg className="h-[15px] w-[15px]" viewBox="0 0 15 15" fill="none" strokeWidth="3.600">
            <path d="M7.500 2A5.500 5.500 0 0 1 12.300 4.700" stroke="#f90" /><path d="M12.300 4.700A5.500 5.500 0 0 1 12.300 10.200" stroke="#6c3" /><path d="M12.300 10.200A5.500 5.500 0 0 1 7.500 13" stroke="#0bb" /><path d="M7.500 13A5.500 5.500 0 0 1 2.700 10.200" stroke="#04f" /><path d="M2.700 10.200A5.500 5.500 0 0 1 2.700 4.700" stroke="#b0d" /><path d="M2.700 4.700A5.500 5.500 0 0 1 7.500 2" stroke="#f03" />
            <circle cx="7.500" cy="7.500" r="7.100" stroke="#333" strokeWidth="0.600" />
          </svg>
        </div>
        <div className="flex flex-1 items-center border-b border-[#bfc8df] pl-[6px] pt-px">
          <svg className="h-[17px] w-[18px]" viewBox="0 0 18 17"><circle cx="7.500" cy="9.500" r="6.800" fill="url(#ballBlue)" stroke="#11255a" /><circle cx="7.500" cy="10.500" r="4.500" fill="#1f3f98" /><path d="M9 6c1-4 3-5 6-4V0l2 3.500-3 3V4.500c-2-1-3 0-5 1.500z" fill="#eee" stroke="#333" strokeWidth="0.800" /></svg>
          <svg className="ml-[14px] h-[16px] w-[14px]" viewBox="0 0 14 16"><path d="M2 10L9 1l4 3-6 9z" fill="#e8e8e8" stroke="#555" /><path d="M5 6l4 3.500 2.500-3.500L8 3z" fill="#e34a22" /><path d="M2 10l4 3-4 2z" fill="#876" stroke="#433" /></svg>
          <svg className="ml-[15px] h-[12px] w-[15px]" viewBox="0 0 15 12"><path d="M0.600 11.300V1h4.500l1.500 2h6v2" fill="#ffe08a" stroke="#8a5d00" /><path d="M0.600 11.400L3.500 5h11l-3 6.400z" fill="#ffd45a" stroke="#8a5d00" /></svg>
          <svg className="ml-[15px] h-[14px] w-[15px]" viewBox="0 0 15 14"><rect x="0.600" y="0.600" width="13.800" height="12.800" fill="#4c74d8" stroke="#2a489a" /><path d="M1 2h13" stroke="#fff" strokeWidth="1.200" /><circle cx="7.500" cy="8" r="4.300" fill="#dfe8ff" /><text x="7.500" y="11.500" textAnchor="middle" fill="#244aa8" className="text-[9px] font-bold">?</text></svg>
          <svg className="ml-[14px] h-[14px] w-[16px]" viewBox="0 0 16 14"><rect x="0.700" y="0.700" width="14.600" height="10" fill="#777" stroke="#111" strokeWidth="1.300" /><path d="M5 13h6M8 11v2" stroke="#111" strokeWidth="1.500" /></svg>
          <svg className="ml-[16px] h-[16px] w-[15px]" viewBox="0 0 15 16"><path d="M1 12.500c2-2 2-3 2-6a4.500 4.500 0 0 1 9 0c0 3 0 4 2 6z" fill="#0a7cff" stroke="#0a55b8" /><path d="M7.500 0.500v2M5.500 14.500h4" stroke="#0a55b8" strokeWidth="1.600" /></svg>
          <div className="ml-auto mt-[2px]"><Gear /></div>
        </div>
      </div>
      <div className="flex flex-1 flex-col overflow-hidden border border-t-0 border-[#bfc8df]">
        <div className="flex h-[36px] items-center pl-[6px]">
          <span className="flex h-[28px] w-[28px] items-center justify-center bg-[#abb9ee]">
            <svg className="h-[18px] w-[22px]" viewBox="0 0 22 18"><path d="M1 5h4l2-3.500h6L15 4h6v12H1z" fill="#3a3a3a" stroke="#111" /><circle cx="12.500" cy="10" r="5.800" fill="#888" stroke="#111" /><circle cx="12.500" cy="10" r="3.600" fill="#173a34" stroke="#aaa" strokeWidth="0.800" /><circle cx="11.500" cy="9" r="1" fill="#bfe" /></svg>
          </span>
          <svg className="ml-[6px] h-[22px] w-[24px]" viewBox="0 0 24 22"><rect x="0.700" y="0.700" width="22.600" height="20.600" fill="#9e9e9e" stroke="#333" strokeWidth="1.300" /><rect x="2.500" y="3.500" width="19" height="15.500" fill="#fff" stroke="#39a9dc" strokeWidth="1.200" /><rect x="4.500" y="5.500" width="15" height="11" fill="#fff" stroke="#d22" strokeWidth="1.300" /></svg>
        </div>
        <div className="flex h-[349px]">
          <div className="ml-[8px] flex w-[201px] flex-col overflow-hidden">
            <Heading className="h-[30px] pt-[6px]">Viewport</Heading>
            <PropertyRow label="Title" value="Top" />
            <PropertyRow label="Width" value="713" dim />
            <PropertyRow label="Height" value="832" dim />
            <PropertyRow label="Projection" value="Parallel" kind="select" />
            <PropertyRow label="Locked" value="" kind="check" />
            <Heading className="h-[26px] pt-px">Camera</Heading>
            <PropertyRow label="Lens Length(..." value="50.0" dim />
            <PropertyRow label="Rotation" value="0.0" />
            <PropertyRow label="X Location" value="685.43" />
            <PropertyRow label="Y Location" value="148.87" />
            <PropertyRow label="Z Location" value="32.85" />
            <PropertyRow label="Distance to T..." value="32.85" kind="plain" />
            <PropertyRow label="Location" value="Place..." kind="button" />
            <Heading className="h-[26px] pt-px">Target</Heading>
            <PropertyRow label="X Target" value="685.43" />
          </div>
          <div className="ml-auto flex w-[17px] flex-col items-center bg-[#f0f0f0]">
            <svg className="my-[6px] h-[5px] w-[7px] shrink-0" viewBox="0 0 7 5" fill="none" stroke="#888" strokeWidth="1.300"><path d="M0.500 4.500l3-3.500 3 3.500" /></svg>
            <div className="h-[214px] w-full shrink-0 bg-[#cdcdcd]" />
            <svg className="mb-[6px] mt-auto h-[5px] w-[7px] shrink-0" viewBox="0 0 7 5" fill="none" stroke="#888" strokeWidth="1.300"><path d="M0.500 0.500l3 3.500 3-3.500" /></svg>
          </div>
        </div>
      </div>
    </div>
  );
}

/* ------------------------------------------------------------------ */
/* Rhino window                                                        */
/* ------------------------------------------------------------------ */

const rhinoMenu: Item[] = [["File", 32], ["Edit", 33], ["View", 39], ["Curve", 45], ["Surface", 53], ["SubD", 42], ["Solid", 41], ["Mesh", 42], ["Dimension", 71], ["Transform", 68], ["Tools", 40], ["Analyze", 55], ["Render", 51], ["Panels", 48], ["V-Ray", 45], ["Help", 40]];

const osnaps: [string, boolean, number, boolean?][] = [["End", true, 43], ["Near", true, 48], ["Point", true, 51], ["Mid", true, 44], ["Cen", false, 44], ["Int", true, 37], ["Perp", true, 47], ["Tan", true, 42], ["Quad", true, 52], ["Knot", false, 48], ["Vertex", false, 57], ["Project", false, 68, true], ["Disable", false, 60, true]];

const status: [string, number, string][] = [
  ["CPlane", 43.500, ""], ["x 637.25", 79, ""], ["y -598.47", 79, ""], ["z", 79, ""], ["Meters", 79, ""], ["Default", 150.500, "layer"], ["Grid Snap", 58.500, ""], ["Ortho", 40.500, "on"], ["Planar", 41.500, ""], ["Osnap", 43.500, "on"], ["SmartTrack", 65.500, "on"], ["Gumball", 52.500, "on"], ["Record History", 82, ""], ["Filter", 36, ""], ["M", 8, "cut"],
];

function Rhino() {
  return (
    <div className="flex w-[959px] flex-col overflow-hidden border-r border-[#777] bg-[#e9ebf0]">
      <div className="flex h-[30px] shrink-0 items-center bg-[#f3f3f3] pl-[8px] text-[#8f8f8f]">
        <svg className="h-[16px] w-[16px]" viewBox="0 0 16 16"><rect width="16" height="16" fill="#000" /><path d="M2 3l3 5 1-3 3 4 2-8 1 7 3 4-4 4H7L3 11 1 7z" fill="#fff" /><path d="M8 10l4 1-2 2z" fill="#000" /></svg>
        <span className="ml-[5px]">Rhino 7 Educational - [Top]</span>
        <div className="ml-auto"><WindowButtons /></div>
      </div>
      <Strip items={rhinoMenu} className="h-[19px] shrink-0 bg-[#fcfcfc] pl-[7px] text-[#666]" />
      <div className="flex h-[63px] shrink-0 pt-[4px]">
        <div className="ml-[3px] h-[60px] w-[3px] border-x border-[#cfd5e6]" />
        <div className="ml-[1px] flex h-[59px] w-[934px] flex-col bg-white pl-[1px] text-black">
          <div className="flex h-[41px] flex-col justify-end overflow-hidden border-b border-[#b9c0d6]">
            <div className="h-[15px] shrink-0 leading-[15px]">Display mode set to "Shaded".</div>
            <div className="h-[15px] shrink-0 leading-[15px]">Display mode set to "Wireframe".</div>
            <div className="h-[15px] shrink-0 leading-[15px]">Command: ~-_OptionsPage</div>
          </div>
          <div className="font-bold leading-[16px] tracking-[-0.1px]">Command:</div>
        </div>
        <div className="flex h-[59px] w-[15px] flex-col justify-end bg-[#f0f0f0]">
          <svg className="h-[18px] w-[15px]" viewBox="0 0 15 18"><rect x="1.500" y="0.500" width="13" height="7.500" fill="#eee" stroke="#999" /><rect x="1.500" y="9" width="13" height="7.500" fill="#eee" stroke="#999" /><path d="M5 5.500l3-3 3 3zM5 11.500l3 3 3-3z" fill="#000" /></svg>
        </div>
      </div>
      <div className="flex h-[861px] shrink-0">
        <div className="flex w-[723px] shrink-0 flex-col">
          <div className="h-[7px] shrink-0" />
          <Viewport />
          <div className="relative -mb-[2px] flex h-[22px] shrink-0 items-center pl-[11px] text-[#333]">
            <svg className="absolute left-[66px] top-0 h-[21px] w-[46px]" viewBox="0 0 46 21" fill="none" stroke="#b9c2da"><path d="M1 0.500l4 3 9 14q1.500 2 4 2h20q4.500 0 4.500-4.500V0" /></svg>
            <Strip items={[["Perspective", 74], ["Top", 35], ["Front", 43], ["Right", 43]]} className="relative" />
            <svg className="h-[10px] w-[10px]" viewBox="0 0 10 10" fill="none" stroke="#777"><path d="M3.500 0.500h3v3h3v3h-3v3h-3v-3h-3v-3h3z" /></svg>
          </div>
        </div>
        <div className="flex w-[235px] flex-col pt-[10px]">
          <LayersPanel />
          <PropertiesPanel />
        </div>
      </div>
      <div className="flex h-[37px] shrink-0 items-center pb-[4px] text-[#333]">
        <div className="ml-[3px] h-[28px] w-[3px] border-x border-[#cfd5e6]" />
        <div className="ml-[3px] flex items-center">
          {osnaps.map(([label, on, w, soft]) => (
            <label key={label} className="flex shrink-0 items-center gap-[3px]" style={{ width: w }}>
              {on ? (
                <svg className="h-[13px] w-[13px] shrink-0" viewBox="0 0 13 13" fill="none"><rect width="13" height="13" rx="3" fill="#0560b8" /><path d="M3 6.500l2.500 2.500L10 4.300" stroke="#fff" strokeWidth="1.100" /></svg>
              ) : (
                <span className={`shrink-0 border bg-[#f8f8f8] ${soft ? "h-[11px] w-[11px] rounded-[4px] border-[#c6c6c6]" : "h-[13px] w-[13px] rounded-[3px] border-[#5f5f5f]"}`} />
              )}
              <span className="whitespace-nowrap">{label}</span>
            </label>
          ))}
        </div>
      </div>
      <div className="flex h-[20px] shrink-0 border-t border-[#b9c2da] text-[#222]">
        {status.map(([label, w, kind], i) => (
          <div key={i} className={`flex shrink-0 items-center overflow-hidden whitespace-nowrap border-r border-[#c3cbe0] ${kind === "layer" ? "gap-[3px] pl-[4px]" : kind === "cut" ? "pl-px" : "justify-center"} ${kind === "on" ? "bg-[#ccd6ee] font-bold tracking-[-0.2px]" : ""}`} style={{ width: w }}>
            {kind === "layer" && <span className="h-[13px] w-[13px] border border-[#333] bg-black" />}
            {label}
          </div>
        ))}
      </div>
    </div>
  );
}

export default function App() {
  return (
    <div className="flex h-[1033px] w-[1920px] flex-col overflow-hidden bg-[#c9c9c9] font-['Open_Sans',sans-serif] text-[11.250px] leading-none">
      <Defs />
      <div className="flex h-[1031px] border-b border-[#777]">
        <Grasshopper />
        <Rhino />
      </div>
    </div>
  );
}
